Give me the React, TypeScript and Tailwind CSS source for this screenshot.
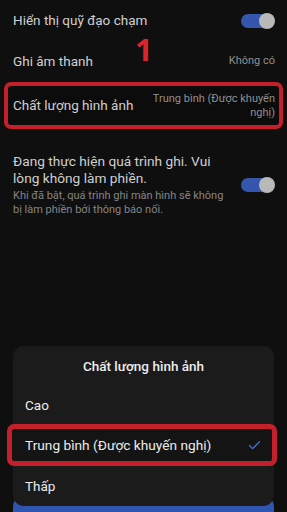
import { Check } from "lucide-react";

function Toggle() {
  return (
    <div className="relative h-[16px] w-[34px] shrink-0">
      <div className="absolute left-0 top-[1px] h-[14px] w-[32px] rounded-full bg-[#3556ad]" />
      <div className="absolute right-0 top-0 h-[16px] w-[16px] rounded-full bg-[#b9b9b9]" />
    </div>
  );
}

export default function App() {
  return (
    <div
      className="relative flex h-[512px] w-[287px] flex-col overflow-hidden bg-[#0f0f0f] text-[#cfcfcf]"
      style={{ fontFamily: "Roboto, 'Noto Sans', sans-serif" }}
    >
      {/* settings list */}
      <div className="flex h-[41px] items-center justify-between pl-[13px] pr-[12px]">
        <span className="text-[13.5px]">Hiển thị quỹ đạo chạm</span>
        <Toggle />
      </div>

      <div className="flex h-[41px] items-center justify-between pl-[13px] pr-[12px]">
        <span className="text-[13.5px]">Ghi âm thanh</span>
        <span className="text-[11px] text-[#8f8f8f]">Không có</span>
      </div>

      <div className="mx-[4px] flex h-[47px] items-center justify-between rounded-[7px] border-[4px] border-[#c3202c] bg-[#0c0c0c] pl-[5px] pr-[4px]">
        <span className="text-[13.5px]">Chất lượng hình ảnh</span>
        <span className="w-[130px] text-right text-[11px] leading-[14px] text-[#8f8f8f]">
          Trung bình (Được khuyến nghị)
        </span>
      </div>

      <div className="flex items-center justify-between pl-[13px] pr-[12px] pt-[24px]">
        <div className="w-[216px]">
          <div className="text-[13.7px] leading-[16.5px]">
            Đang thực hiện quá trình ghi. Vui lòng không làm phiền.
          </div>
          <div className="mt-[3px] text-[11px] leading-[14px] text-[#858585]">
            Khi đã bật, quá trình ghi màn hình sẽ không bị làm phiền bởi thông báo nối.
          </div>
        </div>
        <Toggle />
      </div>

      {/* bottom sheet */}
      <div className="relative z-10 mx-[13px] mt-auto flex flex-col rounded-[11px] bg-[#1b1b1b] text-[#ececec]">
        <div className="flex h-[40px] items-center justify-center text-[13.5px] font-medium">
          Chất lượng hình ảnh
        </div>
        <div className="flex h-[38px] items-center px-[12px] text-[13.5px]">Cao</div>
        <div className="-ml-[6px] -mr-[3px] flex h-[42px] items-center justify-between rounded-[7px] border-[5px] border-[#c3202c] bg-[#141414] pl-[13px] pr-[10px]">
          <span className="text-[13.7px]">Trung bình (Được khuyến nghị)</span>
          <Check size={15} strokeWidth={2} className="text-[#4d72d4]" />
        </div>
        <div className="flex h-[40px] items-center px-[12px] text-[13.5px]">Thấp</div>
      </div>
      <div className="mx-[13px] -mt-[10px] h-[16px] shrink-0 rounded-t-[10px] bg-[#2f55b3]" />

      {/* annotations */}
      <span className="absolute left-[135px] top-[34px] text-[31px] font-bold leading-none text-[#d8262e]" style={{ fontFamily: "'Open Sans', sans-serif" }}>
        1
      </span>
      <span className="absolute left-[137px] top-[384px] text-[32px] font-bold leading-none text-[#d8262e]" style={{ fontFamily: "'Open Sans', sans-serif" }}>
        2
      </span>
    </div>
  );
}
